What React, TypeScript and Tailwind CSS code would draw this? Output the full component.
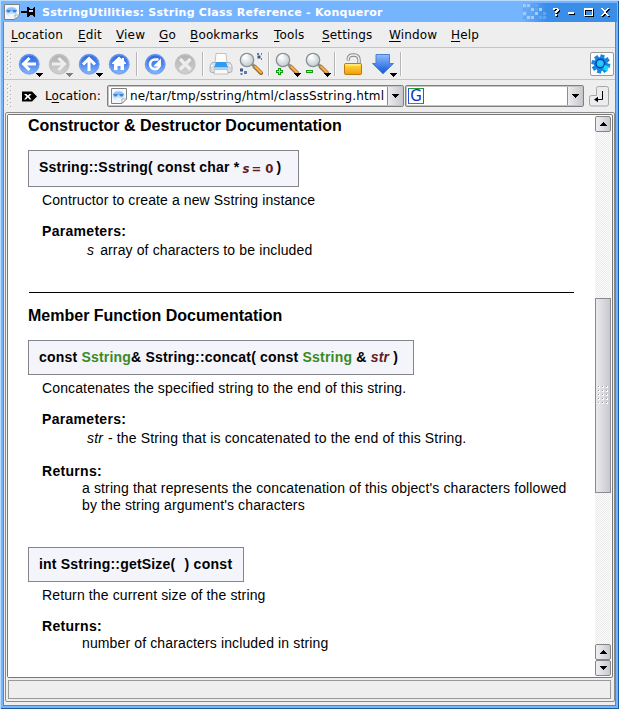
import type { ReactNode } from "react";

const UI = "font-['DejaVu_Sans',sans-serif]";
const DOC = "font-['Liberation_Sans',Arial,sans-serif]";

function PageIcon({ size }: { size: number }) {
  return (
    <svg width={size} height={size} viewBox="0 0 16 16" className="block shrink-0">
      <path d="M.5 .5H15.500V11L11 15.500H.5Z" fill="#f4f7fb" stroke="#808080" />
      <ellipse cx="7.500" cy="7.500" rx="5.800" ry="4.800" fill="#c4e0fa" />
      <path d="M2 6.500Q3 3.500 7.500 3.500Q12 3.500 13 6.500L11.500 7.500H3Z" fill="#8cc2f6" />
      <path d="M2 6H7L5.500 8.500H3.500ZM8 6H13L11.500 8.500H9.500Z" fill="#3d86d8" />
      <path d="M4 10H11L9.500 12H5.500Z" fill="#eef6ff" />
      <path d="M11 15V11H15.500Z" fill="#fff" stroke="#999" strokeWidth=".8" />
    </svg>
  );
}

function Defs() {
  return (
    <svg width="0" height="0" className="absolute">
      <defs>
        <linearGradient id="ball" x1="0" y1="0" x2="0" y2="1">
          <stop offset="0" stopColor="#2f66dc" />
          <stop offset=".5" stopColor="#4c86ee" />
          <stop offset="1" stopColor="#8cbcff" />
        </linearGradient>
        <linearGradient id="greyball" x1="0" y1="0" x2="0" y2="1">
          <stop offset="0" stopColor="#b0b0b0" />
          <stop offset="1" stopColor="#d2d2d2" />
        </linearGradient>
        <linearGradient id="gold" x1="0" y1="0" x2="0" y2="1">
          <stop offset="0" stopColor="#ffe04a" />
          <stop offset="1" stopColor="#f59a00" />
        </linearGradient>
        <linearGradient id="down" x1="0" y1="0" x2="0" y2="1">
          <stop offset="0" stopColor="#8fbcff" />
          <stop offset="1" stopColor="#0f56d8" />
        </linearGradient>
        <linearGradient id="caption" x1="0" y1="0" x2="1" y2="0">
          <stop offset="0" stopColor="#3b8ee8" stopOpacity="0" />
          <stop offset=".26" stopColor="#3b8ee8" />
        </linearGradient>
        <radialGradient id="lens" cx=".4" cy=".35" r=".7">
          <stop offset="0" stopColor="#ffffff" />
          <stop offset="1" stopColor="#b9c6cc" />
        </radialGradient>
        <pattern id="dither" width="2" height="2" patternUnits="userSpaceOnUse">
          <rect width="2" height="2" fill="#fdfdfd" />
          <rect width="1" height="1" fill="#eaeaea" />
          <rect x="1" y="1" width="1" height="1" fill="#eaeaea" />
        </pattern>
      </defs>
    </svg>
  );
}

function Tool({ children, menu, muted }: { children: ReactNode; menu?: boolean; muted?: boolean }) {
  return (
    <svg width="30" height="30" viewBox="0 0 30 30" className="block shrink-0">
      {children}
      {menu && <path d="M22 24h7v1h-1v1h-1v1h-1v1h-1v-1h-1v-1h-1v-1h-1z" fill={muted ? "#808080" : "#000"} />}
    </svg>
  );
}

function Ball({ muted, children }: { muted?: boolean; children: ReactNode }) {
  return (
    <g>
      <circle cx="15.200" cy="15.200" r="10" fill={muted ? "url(#greyball)" : "url(#ball)"} stroke={muted ? "#bcbcbc" : "#6d96e6"} strokeWidth=".8" />
      <circle cx="15.200" cy="15.200" r="9.200" fill="none" stroke={muted ? "#c4c4c4" : "#6d9ff2"} strokeOpacity=".7" />
      {children}
    </g>
  );
}

function Magnifier() {
  return (
    <g>
      <path d="M18.500 17.500L25 24" stroke="#8f6a40" strokeWidth="4" strokeLinecap="round" />
      <path d="M19 17.500L25 23.500" stroke="#ffae38" strokeWidth="2.200" strokeLinecap="round" />
      <path d="M16 15L18.500 17.500" stroke="#8a8a8a" strokeWidth="2.500" />
      <circle cx="11" cy="11" r="6.700" fill="url(#lens)" stroke="#8d9193" strokeWidth="1.300" />
      <path d="M6.800 9.500Q8 6.200 11.500 6" stroke="#fff" strokeWidth="1.500" fill="none" />
    </g>
  );
}

function Separator() {
  return (
    <div className="flex h-[24px] w-[6px] shrink-0 pl-[2px]">
      <div className="w-px bg-[#b5b5b5]" />
      <div className="w-px bg-[#fcfcfc]" />
    </div>
  );
}

function Grip({ rows }: { rows: number }) {
  return (
    <svg width="10" height={rows * 4} viewBox={`0 0 10 ${rows * 4}`} className="block shrink-0">
      {Array.from({ length: rows }, (_, i) => (
        <g key={i}>
          <rect x="3" y={i * 4} width="1" height="1" fill="#aaa" />
          <rect x="4" y={i * 4 + 1} width="1" height="1" fill="#fff" />
          <rect x="6" y={i * 4 + 2} width="1" height="1" fill="#aaa" />
          <rect x="7" y={i * 4 + 3} width="1" height="1" fill="#fff" />
        </g>
      ))}
    </svg>
  );
}

function Arrow({ up }: { up?: boolean }) {
  return (
    <svg width="7" height="4" viewBox="0 0 7 4" className="block shrink-0" shapeRendering="crispEdges">
      <path d={up ? "M3 0h1v1h1v1h1v1h1v1H0V3h1V2h1V1h1z" : "M0 0h7v1H6v1H5v1H4v1H3V3H2V2H1V1H0z"} fill="#000" />
    </svg>
  );
}

function Menu({ text, hot = 0, className }: { text: string; hot?: number; className: string }) {
  return (
    <div className={`shrink-0 whitespace-nowrap ${className}`}>
      {text.slice(0, hot)}
      <span className="underline decoration-1 underline-offset-2">{text[hot]}</span>
      {text.slice(hot + 1)}
    </div>
  );
}

function TitleBar() {
  return (
    <div className="flex h-[21px] shrink-0 bg-[#75b5ff] pt-[2px]">
      <div className="pl-[3px] pt-px"><PageIcon size={16} /></div>
      <svg width="15" height="12" viewBox="0 0 15 12" className="ml-px mt-[3px] block" shapeRendering="crispEdges">
        <path d="M0 5h7v2H0z" fill="#000" />
        <path d="M6 1h2v1h1v1h3V2h1V1h1v10h-1v-1h-1V9H9v1H8v1H6z" fill="#000" />
        <path d="M8 4h4v2H8z" fill="#c8dcf4" />
      </svg>
      <div className="ml-[6px] mt-px whitespace-nowrap text-[11px] font-bold leading-[17px] tracking-[0.27px] text-white">
        SstringUtilities: Sstring Class Reference - Konqueror
      </div>
      <svg width="96" height="19" viewBox="0 0 96 19" className="ml-auto block shrink-0" shapeRendering="crispEdges">
        <path d="M0 0H96V19H0Z" fill="url(#caption)" />
        {[
          [2, 1], [6, 1], [10, 5], [18, 5], [2, 9], [14, 9], [6, 13], [10, 13],
        ].map(([x, y]) => (
          <rect key={`l${x}-${y}`} x={x} y={y} width="3" height="3" fill="#a3cbfb" />
        ))}
        {[
          [14, 1], [2, 5], [6, 5], [14, 5], [10, 9], [6, 9], [22, 9], [2, 13], [18, 13], [22, 13],
        ].map(([x, y]) => (
          <rect key={`m${x}-${y}`} x={x} y={y} width="3" height="3" fill="#62a5f0" />
        ))}
        <g fill="#000" transform="translate(1 1)">
          <path d="M32 5h5v1h1v2h-1v1h-1v1h-2V8h1V7h1V6h-2v1h-2zM34 11h2v2h-2z" />
          <path d="M47 9h6v2h-6z" />
          <path d="M63 5h9v8h-9zM64 7v5h7V7z" fillRule="evenodd" />
          <path d="M80 5h2v1h1v1h2V6h1V5h2v1h-1v1h-1v1h-1v2h1v1h1v1h1v1h-2v-1h-1v-1h-2v1h-1v1h-2v-1h1v-1h1v-1h1V8h-1V7h-1V6h-1z" />
        </g>
        <g fill="#fff">
          <path d="M32 5h5v1h1v2h-1v1h-1v1h-2V8h1V7h1V6h-2v1h-2zM34 11h2v2h-2z" />
          <path d="M47 9h6v2h-6z" />
          <path d="M63 5h9v8h-9zM64 7v5h7V7z" fillRule="evenodd" />
          <path d="M80 5h2v1h1v1h2V6h1V5h2v1h-1v1h-1v1h-1v2h1v1h1v1h1v1h-2v-1h-1v-1h-2v1h-1v1h-2v-1h1v-1h1v-1h1V8h-1V7h-1V6h-1z" />
        </g>
      </svg>
      <div className="w-px shrink-0" />
    </div>
  );
}

function MainToolbar() {
  return (
    <div className="flex h-[32px] shrink-0 items-start border-t border-[#c4c4c4] bg-[#eeeeee]">
      <div className="pt-[4px]"><Grip rows={6} /></div>
      <div className="flex items-start pt-px">
        <Tool menu>
          <Ball><path d="M22 15H10.500M15.500 9L9.500 15L15.500 21" stroke="#fff" strokeWidth="3" fill="none" /></Ball>
        </Tool>
        <Tool menu muted>
          <Ball muted><path d="M8 15H19.500M14.500 9L20.500 15L14.500 21" stroke="#eee" strokeWidth="3" fill="none" /></Ball>
        </Tool>
        <Tool menu>
          <Ball><path d="M15 22V10.500M9 15.500L15 9.500L21 15.500" stroke="#fff" strokeWidth="3" fill="none" /></Ball>
        </Tool>
        <Tool>
          <Ball><path d="M15 7.500L8 14V15H10V21H13.500V17H16.500V21H20V15H22V14L20 12V9H18V10.200Z" fill="#fff" /></Ball>
        </Tool>
        <div className="pt-[3px]"><Separator /></div>
        <Tool>
          <Ball>
            <path d="M18.500 10.500H15A4.800 4.800 0 1 0 19.500 16.500" stroke="#fff" strokeWidth="2.600" fill="none" />
            <path d="M14 16.500L21 9.500V17.500H14Z" fill="#fff" />
          </Ball>
        </Tool>
        <Tool>
          <Ball muted><path d="M10 10L20.500 20.500M20.500 10L10 20.500" stroke="#eee" strokeWidth="3.200" /></Ball>
        </Tool>
        <div className="pt-[3px]"><Separator /></div>
        <Tool>
          <path d="M10 4.500H20L21 14H9Z" fill="#fdfdfd" stroke="#b5b5b5" strokeWidth=".8" />
          <path d="M6 13.500H24L26 17V21.500Q26 23.500 24 23.500H6Q4 23.500 4 21.500V17Z" fill="#d9dce0" stroke="#a0a6ac" strokeWidth=".8" />
          <path d="M10 13H20L22 19H8Z" fill="#2f9cf2" />
          <path d="M9 18H21L21.500 19.500H8.500Z" fill="#8fd0ff" />
          <path d="M5 17L7 16M25 17L23 16" stroke="#fff" strokeWidth="1.200" fill="none" />
          <path d="M8.500 20.500H21.500L22 25H8Z" fill="#f8f8f8" stroke="#a5a5a5" strokeWidth=".6" />
        </Tool>
        <Tool>
          <Magnifier />
          <path d="M21.500 6.500h3v3h-3zM4 19.500h3v3H4z" fill="#35598f" />
          <path d="M25 4h1v2h-1zM21 4h2v2h-2zM25 9h1v2h-1zM4.500 24h2v2h-2zM8 22h3v3H8z" fill="#5a7dae" />
        </Tool>
        <div className="pt-[3px]"><Separator /></div>
        <Tool menu>
          <Magnifier />
          <path d="M7.500 19V26M4 22.500H11" stroke="#129b12" strokeWidth="3" />
          <path d="M7.500 20V25M5 22.500H10" stroke="#8dfb6c" strokeWidth="1" />
        </Tool>
        <Tool menu>
          <Magnifier />
          <path d="M4 22.500H11" stroke="#129b12" strokeWidth="3" />
          <path d="M5 22.500H10" stroke="#8dfb6c" strokeWidth="1" />
        </Tool>
        <div className="pt-[3px]"><Separator /></div>
        <Tool>
          <path d="M10.300 11.500V10Q10.300 6 15.500 6Q21 6 21 11V15" stroke="#858585" strokeWidth="3.400" fill="none" />
          <path d="M10.300 11V10Q10.300 6 15.500 6Q21 6 21 11V15" stroke="#eee" strokeWidth="1.600" fill="none" />
          <rect x="6.500" y="14.500" width="17" height="11" rx="1" fill="url(#gold)" stroke="#b97a18" />
          <path d="M8 16H22" stroke="#fff6a8" />
        </Tool>
        <Tool menu>
          <path d="M8 5.500H21.500V14.500H25.500L15 24.800L4.500 14.500H8Z" fill="url(#down)" stroke="#4a7fd4" />
        </Tool>
        <div className="pt-[3px]"><Separator /></div>
      </div>
      <svg width="24" height="24" viewBox="0 0 24 24" className="ml-auto mr-[1px] mt-[4px] block shrink-0">
        <rect x=".5" y=".5" width="23" height="23" rx="1.500" fill="#fff" stroke="#999" />
        <g fill="#1686e4">
          {[0, 45, 90, 135, 180, 225, 270, 315].map((a) => (
            <rect key={a} x="8.700" y="2.600" width="4.200" height="6" transform={`rotate(${a + 12} 10.800 12)`} />
          ))}
        </g>
        <circle cx="10.800" cy="12" r="6.900" fill="#1686e4" />
        <circle cx="10.300" cy="11.500" r="4.300" fill="#28b8ff" stroke="#0745a0" strokeWidth="1.500" />
        <path d="M14.500 13L19 14.500L17 19L13 17.500Z" fill="#16dcf5" />
        <path d="M8.500 13L9.500 9.500L11 13L12 9.500" stroke="#12e0f8" fill="none" />
      </svg>
    </div>
  );
}

function DropButton() {
  return (
    <div className="flex w-[15px] shrink-0 items-center justify-center border-l border-[#8c8c8c] bg-gradient-to-r from-[#ededf0] to-[#c9c9cf]">
      <Arrow />
    </div>
  );
}

function LocationBar() {
  return (
    <div className="flex h-[33px] shrink-0 items-start border-t border-[#c4c4c4] bg-[#eeeeee]">
      <div className="pt-[4px]"><Grip rows={6} /></div>
      <svg width="16" height="11" viewBox="0 0 16 11" className="ml-[8px] mt-[11px] block shrink-0">
        <path d="M0 .5H10L15 5.500L10 10.500H0Z" fill="#000" />
        <path d="M2 3H4.500L6 4.500L7.500 3H9.500L7.200 5.500L9.500 8.500H7.500L5.800 6.500L4 8.500H2L4.500 5.500Z" fill="#fff" />
      </svg>
      <Menu text="Location:" hot={1} className="ml-[7px] mt-[8px] w-[62px] text-[12px] leading-[16px] tracking-[0.12px]" />
      <div className="mt-[5px] flex h-[22px] w-[297px] shrink-0 overflow-hidden rounded-[2px] border border-[#808080] bg-white p-px shadow-[inset_0_0_0_1px_#c4c4c4]">
        <div className="ml-[2px] mt-[1px]"><PageIcon size={16} /></div>
        <div className="ml-[3px] w-[257px] shrink-0 overflow-hidden whitespace-nowrap text-[12px] leading-[18px] tracking-[0.17px]">
          ne/tar/tmp/sstring/html/classSstring.html
        </div>
        <DropButton />
      </div>
      <div className="ml-px mt-[5px] flex h-[22px] w-[179px] shrink-0 justify-between rounded-[2px] border border-[#808080] bg-white p-px shadow-[inset_0_0_0_1px_#c4c4c4]">
        <div className="ml-px mt-px flex h-[16px] w-[16px] items-center justify-center border border-t-[#2a9a3a] border-r-[#e02020] border-b-[#2a9a3a] border-l-[#2453d6] text-[15px] leading-[14px] text-[#1232c8]">
          G
        </div>
        <DropButton />
      </div>
      <svg width="20" height="21" viewBox="0 0 20 21" className="ml-[5px] mt-[6px] block shrink-0">
        <path d="M9.500 .5H17.500Q19.500 .5 19.500 2.500V18Q19.500 20 17.500 20H2.500Q.5 20 .5 18V11.500Q.5 9.500 2.500 9.500H7.500V2.500Q7.500 .5 9.500 .5Z" fill="#ececee" stroke="#a6a6a6" />
        <path d="M13.500 5V13.500H7" stroke="#000" fill="none" />
        <path d="M5 13.500L9 10.800V16.200Z" fill="#000" />
      </svg>
    </div>
  );
}

function Scrollbar() {
  const button = "flex h-[16px] w-[16px] shrink-0 items-center justify-center rounded-[2px] border border-[#858585] bg-gradient-to-r from-[#f0f0f4] to-[#c8c8d0]";
  return (
    <div className="flex w-[17px] shrink-0 flex-col">
      <div className="h-px" />
      <div className={button}><Arrow up /></div>
      <svg width="16" height="166" className="block shrink-0"><rect width="16" height="166" fill="url(#dither)" /></svg>
      <div className="flex h-[195px] w-[16px] shrink-0 items-center justify-center border border-[#8a8a8e] bg-gradient-to-r from-[#eaeaef] to-[#c8c8ce]">
        <svg width="11" height="19" viewBox="0 0 11 19" className="block" shapeRendering="crispEdges">
          {Array.from({ length: 15 }, (_, i) => (
            <g key={i} transform={`translate(${(i % 3) * 4} ${Math.floor(i / 3) * 4})`}>
              <rect width="2" height="2" fill="#fff" />
              <rect width="1" height="1" fill="#999" />
            </g>
          ))}
        </svg>
      </div>
      <svg width="16" height="151" className="block shrink-0"><rect width="16" height="151" fill="url(#dither)" /></svg>
      <div className={button}><Arrow up /></div>
      <div className={button}><Arrow /></div>
    </div>
  );
}

function Line({ className, children }: { className: string; children: ReactNode }) {
  return <div className={`shrink-0 whitespace-pre leading-[18px] ${className}`}>{children}</div>;
}

function Proto({ className, children }: { className: string; children: ReactNode }) {
  return (
    <div className={`flex shrink-0 items-start whitespace-pre border border-[#84848a] bg-[#f4f4fb] pl-[10px] text-[14px] font-bold leading-[18px] tracking-[0.2px] ${className}`}>
      {children}
    </div>
  );
}

function Document() {
  return (
    <div className={`flex min-w-0 flex-1 flex-col bg-white pl-[20px] text-[14px] tracking-[0.13px] text-black ${DOC}`}>
      <Line className="mt-[2px] h-[18px] text-[16px] font-bold tracking-[0px]">Constructor &amp; Destructor Documentation</Line>
      <Proto className="mt-[15px] h-[37px] w-[271px] pt-[7px]">
        <span>Sstring::Sstring( const char *</span>
        <span className="ml-[3px] pt-[2px] font-['DejaVu_Sans_Condensed','DejaVu_Sans',sans-serif] text-[13px] tracking-[0px] text-[#602020]"><i>s</i><span className="ml-[2px]">=</span><span className="ml-[4px]">0</span></span>
        <span className="ml-[3px]">)</span>
      </Proto>
      <Line className="ml-[14px] mt-[4px] h-[18px] tracking-[0.11px]">Contructor to create a new Sstring instance</Line>
      <Line className="ml-[14px] mt-[13px] h-[18px] font-bold tracking-[0.3px]">Parameters:</Line>
      <Line className="ml-[59px] mt-[1px] h-[18px]"><i>s</i><span className="ml-[6px]">array of characters to be included</span></Line>
      <div className="ml-px mt-[33px] h-px w-[545px] shrink-0 bg-black" />
      <Line className="mt-[14px] h-[18px] text-[16px] font-bold tracking-[0px]">Member Function Documentation</Line>
      <Proto className="mt-[15px] h-[35px] w-[386px] pt-[7px]">
        <span>const <span className="text-[#3a8a1e]">Sstring</span>&amp; Sstring::concat( const <span className="text-[#3a8a1e]">Sstring</span> &amp; <i className="text-[#602020]">str</i> )</span>
      </Proto>
      <Line className="ml-[14px] mt-[4px] h-[18px]">Concatenates the specified string to the end of this string.</Line>
      <Line className="ml-[14px] mt-[13px] h-[18px] font-bold tracking-[0.3px]">Parameters:</Line>
      <Line className="ml-[59px] mt-[1px] h-[18px]"><i>str</i><span className="ml-[5px] tracking-[0.15px]">- the String that is concatenated to the end of this String.</span></Line>
      <Line className="ml-[14px] mt-[15px] h-[17px] font-bold tracking-[0.3px]">Returns:</Line>
      <Line className="ml-[54px] h-[17px]">a string that represents the concatenation of this object's characters followed</Line>
      <Line className="ml-[54px] h-[18px]">by the string argument's characters</Line>
      <Proto className="mt-[33px] h-[35px] w-[216px] pt-[7px]"><span>int Sstring::getSize(</span><span className="ml-[9px] tracking-[0.3px]">) const</span></Proto>
      <Line className="ml-[14px] mt-[4px] h-[18px]">Return the current size of the string</Line>
      <Line className="ml-[14px] mt-[13px] h-[17px] font-bold tracking-[0.3px]">Returns:</Line>
      <Line className="ml-[54px] h-[18px]">number of characters included in string</Line>
    </div>
  );
}

export default function App() {
  return (
    <div className="flex h-[709px] w-[619px] overflow-hidden border-t border-l border-t-[#b8dcff] border-l-[#b8dcff] bg-[#75b5ff]">
      <Defs />
      <div className={`flex w-[618px] flex-col border-b border-r border-b-[#1c5a9c] border-r-[#1c5a9c] text-black ${UI}`}>
        <TitleBar />
        <div className="mx-[2px] flex flex-1 flex-col border-x border-b border-[#3b8ee8] bg-[#eeeeee]">
          <div className="flex h-[25px] shrink-0 pt-[5px] text-[12px] leading-[16px] tracking-[0.15px]">
            <Menu text="Location" className="ml-[7px] w-[67px]" />
            <Menu text="Edit" className="w-[38px]" />
            <Menu text="View" className="w-[43px]" />
            <Menu text="Go" className="w-[31px]" />
            <Menu text="Bookmarks" className="w-[84px]" />
            <Menu text="Tools" className="w-[48px]" />
            <Menu text="Settings" className="w-[67px]" />
            <Menu text="Window" className="w-[62px]" />
            <Menu text="Help" className="w-[40px]" />
          </div>
          <MainToolbar />
          <LocationBar />
          <div className="ml-px flex h-[590px] flex-col rounded-[2px] border border-[#8a8a8a] bg-[#eeeeee]">
            <div className="mx-px mt-px flex h-[564px] shrink-0 rounded-[2px] border border-[#777] bg-white">
              <Document />
              <Scrollbar />
            </div>
            <div className="ml-[2px] mr-[3px] mt-[2px] h-[19px] shrink-0 border border-[#999]" />
          </div>
        </div>
        <div className="h-[2px] shrink-0" />
      </div>
    </div>
  );
}
